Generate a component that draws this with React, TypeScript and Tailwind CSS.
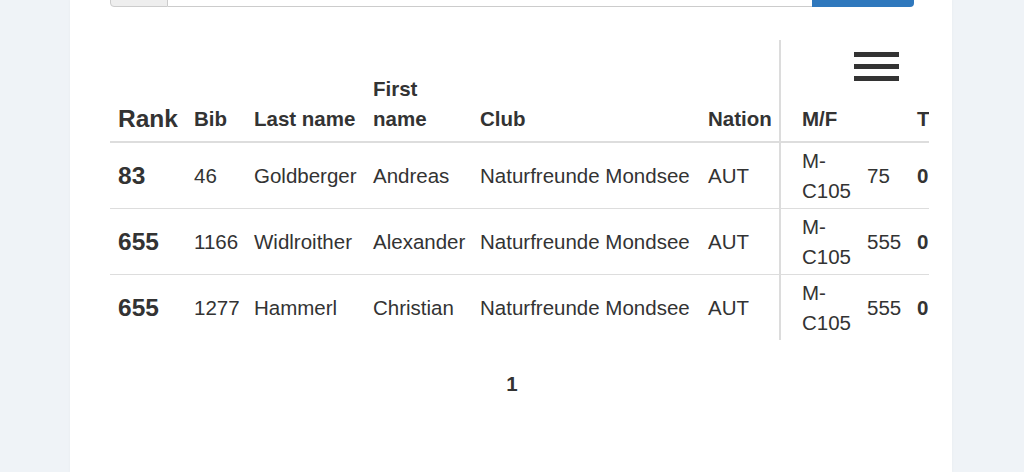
import React from 'react';

interface Result {
  rank: string;
  bib: string;
  lastName: string;
  firstName: string;
  club: string;
  nation: string;
  category: string;
  points: string;
  total: string;
}

const results: Result[] = [
  { rank: '83', bib: '46', lastName: 'Goldberger', firstName: 'Andreas', club: 'Naturfreunde Mondsee', nation: 'AUT', category: 'M-C105', points: '75', total: '0' },
  { rank: '655', bib: '1166', lastName: 'Widlroither', firstName: 'Alexander', club: 'Naturfreunde Mondsee', nation: 'AUT', category: 'M-C105', points: '555', total: '0' },
  { rank: '655', bib: '1277', lastName: 'Hammerl', firstName: 'Christian', club: 'Naturfreunde Mondsee', nation: 'AUT', category: 'M-C105', points: '555', total: '0' },
];

const th = 'px-2 pb-[7px] align-bottom text-left font-bold whitespace-nowrap';
const td = 'px-2 pt-[3px] pb-[2px] align-middle whitespace-nowrap';

const App: React.FC = () => {
  return (
    <div
      className="h-[472px] overflow-hidden bg-[#eff3f7] text-[#333] text-[20.5px] leading-[30px]"
      style={{ fontFamily: '"Liberation Sans", Arial, Helvetica, sans-serif' }}
    >
      <div className="ml-[70px] w-[882px] h-full flex flex-col items-start bg-white pl-[40px] shadow-[0_0_3px_rgba(0,0,0,0.04)]">
        {/* search group, scrolled mostly out of view */}
        <div className="flex w-[804px] h-[40px] -mt-[33px] shrink-0">
          <div className="w-[58px] bg-[#eeeeee] border border-[#cccccc] rounded-bl-[4px]" />
          <div className="flex-1 bg-white border-y border-[#cccccc]" />
          <div className="w-[102px] bg-[#2f78bd] rounded-br-[4px]" />
        </div>

        <div className="mt-[33px] w-[819px] overflow-hidden shrink-0">
          <table className="table-fixed border-collapse w-[839px]">
            <colgroup>
              <col className="w-[76px]" />
              <col className="w-[60px]" />
              <col className="w-[119px]" />
              <col className="w-[107px]" />
              <col className="w-[228px]" />
              <col className="w-[80px]" />
              <col className="w-[79px]" />
              <col className="w-[50px]" />
              <col className="w-[40px]" />
            </colgroup>
            <thead>
              <tr>
                <th rowSpan={2} className={`${th} text-[24.5px]`}>Rank</th>
                <th rowSpan={2} className={th}>Bib</th>
                <th rowSpan={2} className={th}>Last name</th>
                <th rowSpan={2} className="px-2 pb-[7px] align-bottom text-left font-bold">First name</th>
                <th rowSpan={2} className={th}>Club</th>
                <th rowSpan={2} className={`${th} border-r-2 border-[#dcdcdc]`}>Nation</th>
                <th colSpan={3} className="pt-[12px] pb-[23px] pl-[73px] align-top">
                  <div className="flex flex-col gap-[7px] w-[45px]">
                    <span className="block h-[5px] bg-[#333]" />
                    <span className="block h-[5px] bg-[#333]" />
                    <span className="block h-[5px] bg-[#333]" />
                  </div>
                </th>
              </tr>
              <tr className="border-b-2 border-[#dddddd]">
                <th className="pl-[21px] pr-2 pb-[7px] text-left font-bold">M/F</th>
                <th className="px-2 pb-[7px]" />
                <th className="px-2 pb-[7px] text-left font-bold">T</th>
              </tr>
            </thead>
            <tbody>
              {results.map((r, i) => (
                <tr key={i} className={i < results.length - 1 ? 'border-b border-[#dddddd]' : ''}>
                  <td className={`${td} text-[24.5px] font-bold`}>{r.rank}</td>
                  <td className={td}>{r.bib}</td>
                  <td className={td}>{r.lastName}</td>
                  <td className={td}>{r.firstName}</td>
                  <td className={td}>{r.club}</td>
                  <td className={`${td} border-r-2 border-[#dcdcdc]`}>{r.nation}</td>
                  <td className="pl-[21px] pr-2 pt-[3px] pb-[2px] align-middle">{r.category}</td>
                  <td className={td}>{r.points}</td>
                  <td className={`${td} font-bold`}>{r.total}</td>
                </tr>
              ))}
            </tbody>
          </table>
        </div>

        <div className="mt-[29px] w-[804px] text-center font-bold">1</div>
      </div>
    </div>
  );
};

export default App;
